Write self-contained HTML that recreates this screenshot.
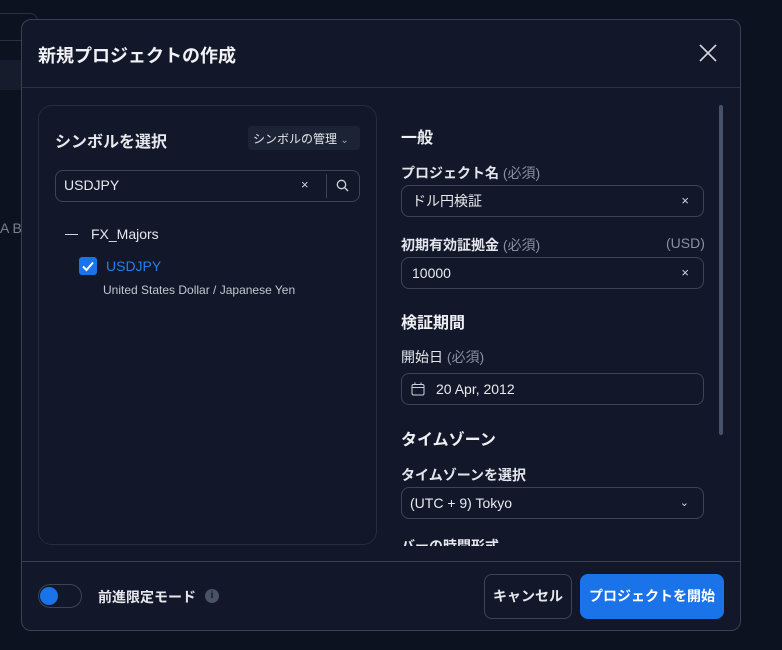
<!DOCTYPE html>
<html><head><meta charset="utf-8"><style>
*{box-sizing:border-box;margin:0;padding:0}
body{width:782px;height:650px;background:#0d1220;font-family:"Liberation Sans","Noto Sans CJK JP",sans-serif;color:#e6e8ee;position:relative;overflow:hidden}
.abs{position:absolute}
.dlg{left:21px;top:19px;width:720px;height:612px;background:#121829;border:1px solid #3a4152;border-radius:10px}
.b{font-weight:700}
.inp{position:absolute;border:1px solid #3c4456;border-radius:8px;height:32px;font-size:14px;display:flex;align-items:center;padding-left:10px;color:#e8eaf0}
.x{position:absolute;right:14px;top:7px;font-size:13px;color:#cfd3dc}
.lbl{position:absolute;font-size:14px;font-weight:700;color:#e3e6ec}
.lbl span{font-weight:400;color:#8a90a0}
.h{position:absolute;font-size:16px;font-weight:700;color:#eef0f4}
</style></head><body>
<div class="abs" style="left:-10px;top:13px;width:48px;height:28px;border:1px solid #2a3040;border-radius:8px"></div>
<div class="abs" style="left:0;top:60px;width:30px;height:30px;background:#161c2b"></div>
<div class="abs" style="left:0;top:220px;font-size:14px;color:#7a8090">A Br</div>
<div class="abs dlg"></div>
<div class="abs b" style="left:38px;top:42px;font-size:18px;color:#f0f2f6">新規プロジェクトの作成</div>
<svg class="abs" style="left:698px;top:43px" width="20" height="20" viewBox="0 0 20 20"><path d="M2 2L18 18M18 2L2 18" stroke="#d0d4dc" stroke-width="1.6"/></svg>
<div class="abs" style="left:22px;top:87px;width:718px;height:1px;background:#2c3344"></div>
<div class="abs" style="left:38px;top:105px;width:339px;height:440px;border:1px solid #252c3c;border-radius:14px"></div>
<div class="abs b" style="left:55px;top:128px;font-size:16px">シンボルを選択</div>
<div class="abs" style="left:248px;top:126px;width:112px;height:24px;background:#1c2334;border-radius:4px;font-size:12px;padding:4px 0 0 5px">シンボルの管理 <span style="font-size:10px;color:#9aa">⌄</span></div>
<div class="abs" style="left:55px;top:170px;width:305px;height:32px;border:1px solid #3c4456;border-radius:8px"></div>
<div class="abs" style="left:64px;top:177px;font-size:14px">USDJPY</div>
<div class="abs" style="left:301px;top:177px;font-size:13px;color:#cfd3dc">×</div>
<div class="abs" style="left:326px;top:174px;width:1px;height:24px;background:#3c4456"></div>
<svg class="abs" style="left:336px;top:179px" width="13" height="13" viewBox="0 0 13 13"><circle cx="5.5" cy="5.5" r="4.2" stroke="#cfd3dc" stroke-width="1.3" fill="none"/><path d="M8.5 8.5L12 12" stroke="#cfd3dc" stroke-width="1.3"/></svg>
<div class="abs" style="left:65px;top:234px;width:13px;height:1px;background:#d0d4dc"></div>
<div class="abs" style="left:91px;top:226px;font-size:14px">FX_Majors</div>
<div class="abs" style="left:79px;top:257px;width:18px;height:18px;background:#1a73e8;border-radius:3px"></div>
<svg class="abs" style="left:79px;top:257px" width="18" height="18" viewBox="0 0 18 18"><path d="M4 9.5L7.5 13L14 5.5" stroke="#fff" stroke-width="2" fill="none"/></svg>
<div class="abs" style="left:106px;top:258px;font-size:14px;color:#2a7de6">USDJPY</div>
<div class="abs" style="left:103px;top:283px;font-size:12px;color:#c2c6cf">United States Dollar / Japanese Yen</div>
<div class="abs" style="left:719px;top:105px;width:4px;height:330px;background:#48516a;border-radius:2px"></div>
<div class="h" style="left:401px;top:124px">一般</div>
<div class="lbl" style="left:401px;top:163px">プロジェクト名 <span>(必須)</span></div>
<div class="inp" style="left:401px;top:185px;width:303px">ドル円検証<span class="x">×</span></div>
<div class="lbl" style="left:401px;top:235px">初期有効証拠金 <span>(必須)</span></div>
<div class="lbl" style="left:666px;top:235px"><span>(USD)</span></div>
<div class="inp" style="left:401px;top:257px;width:303px">10000<span class="x">×</span></div>
<div class="h" style="left:401px;top:309px">検証期間</div>
<div class="lbl" style="left:401px;top:347px;font-weight:400">開始日 <span>(必須)</span></div>
<div class="inp" style="left:401px;top:373px;width:303px;padding-left:34px">20 Apr, 2012</div>
<svg class="abs" style="left:411px;top:382px" width="14" height="14" viewBox="0 0 14 14"><rect x="1" y="2.5" width="12" height="10.5" rx="1.5" stroke="#cfd3dc" fill="none"/><path d="M1 5.5H13M4 0.5V3M10 0.5V3" stroke="#cfd3dc"/></svg>
<div class="h" style="left:401px;top:426px">タイムゾーン</div>
<div class="lbl" style="left:401px;top:465px">タイムゾーンを選択</div>
<div class="inp" style="left:401px;top:487px;width:303px;padding-left:8px">(UTC + 9) Tokyo<span class="x" style="font-size:11px;top:8px">⌄</span></div>
<div class="abs" style="left:401px;top:536px;width:140px;height:10px;overflow:hidden"><div class="lbl" style="position:static">バーの時間形式</div></div>
<div class="abs" style="left:22px;top:561px;width:718px;height:1px;background:#3a4152"></div>
<div class="abs" style="left:38px;top:584px;width:44px;height:24px;border:1px solid #3c4456;border-radius:12px"></div>
<div class="abs" style="left:40px;top:587px;width:18px;height:18px;background:#1a73e8;border-radius:50%"></div>
<div class="abs b" style="left:98px;top:587px;font-size:14px">前進限定モード</div>
<div class="abs" style="left:205px;top:589px;width:14px;height:14px;border-radius:50%;background:#4a5266;color:#121829;font-size:10px;text-align:center;line-height:14px;font-weight:700">i</div>
<div class="abs b" style="left:484px;top:574px;width:88px;height:45px;border:1px solid #3c4456;border-radius:8px;font-size:14px;text-align:center;line-height:43px">キャンセル</div>
<div class="abs b" style="left:580px;top:574px;width:144px;height:45px;background:#1a73e8;border-radius:8px;font-size:14px;text-align:center;line-height:45px;color:#fff">プロジェクトを開始</div>
</body></html>
